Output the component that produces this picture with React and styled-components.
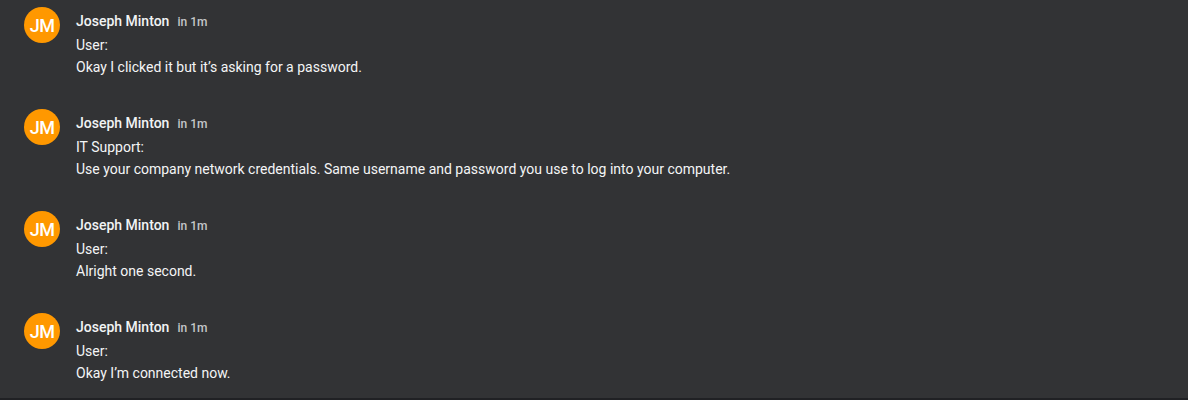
import styled, { createGlobalStyle } from "styled-components";

const messages = [
  { sender: "User:", text: "Okay I clicked it but it’s asking for a password." },
  {
    sender: "IT Support:",
    text: "Use your company network credentials. Same username and password you use to log into your computer.",
  },
  { sender: "User:", text: "Alright one second." },
  { sender: "User:", text: "Okay I’m connected now." },
];

export default function App() {
  return (
    <>
      <GlobalStyle />
      <Feed>
        {messages.map((m, i) => (
          <Message key={i}>
            <Avatar>JM</Avatar>
            <Content>
              <Header>
                <Name>Joseph Minton</Name>
                <Time>in 1m</Time>
              </Header>
              <Body>
                <Line>{m.sender}</Line>
                <Line>{m.text}</Line>
              </Body>
            </Content>
          </Message>
        ))}
      </Feed>
    </>
  );
}

const GlobalStyle = createGlobalStyle`
  html, body {
    margin: 0;
    padding: 0;
    background: #323335;
  }
  body {
    font-family: Roboto, "Liberation Sans", Arial, sans-serif;
  }
`;

const Feed = styled.div`
  height: 398px;
  background: #323335;
  border-bottom: 2px solid #202124;
  overflow: hidden;
`;

const Message = styled.div`
  display: flex;
  align-items: flex-start;
  gap: 16px;
  height: 102px;
  padding: 7px 24px 0;
  box-sizing: border-box;
`;

const Avatar = styled.div`
  flex: none;
  width: 36px;
  height: 36px;
  border-radius: 50%;
  background: #ff9800;
  color: #ffffff;
  display: flex;
  align-items: center;
  justify-content: center;
  font-size: 18px;
  font-weight: 500;
  letter-spacing: -0.5px;
`;

const Content = styled.div`
  padding-top: 4px;
  display: flex;
  flex-direction: column;
`;

const Header = styled.div`
  display: flex;
  align-items: baseline;
  gap: 8px;
  height: 20px;
  line-height: 20px;
`;

const Name = styled.span`
  font-size: 14px;
  font-weight: 500;
  color: #f1f3f4;
`;

const Time = styled.span`
  font-size: 12px;
  font-weight: 500;
  color: #c4c7c9;
`;

const Body = styled.div`
  margin-top: 3px;
  font-size: 14px;
  line-height: 22px;
  color: #f4f5f6;
`;

const Line = styled.div``;
